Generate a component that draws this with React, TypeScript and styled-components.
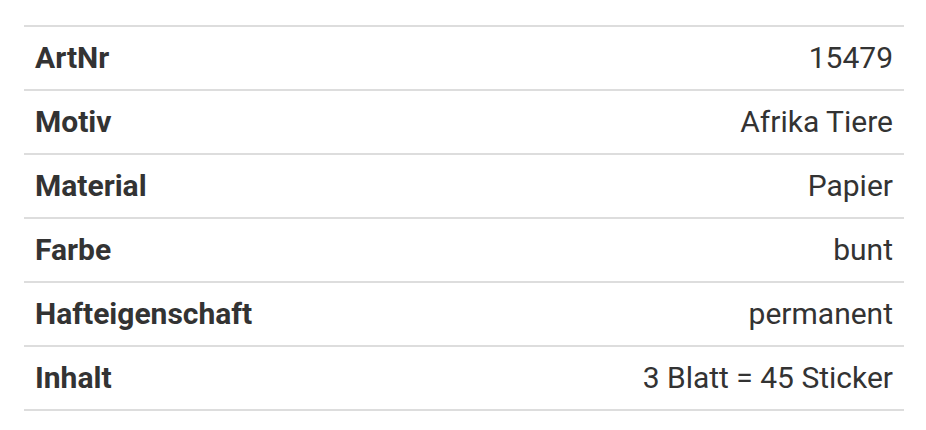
import React from "react";
import styled, { createGlobalStyle } from "styled-components";

const GlobalStyle = createGlobalStyle`
  html, body {
    margin: 0;
    padding: 0;
    background: #ffffff;
  }
  body {
    font-family: Roboto, "Liberation Sans", sans-serif;
    color: #333333;
  }
`;

const Page = styled.div`
  padding: 25px 22px 0 24px;
`;

const Table = styled.div`
  width: 880px;
  border-bottom: 2px solid #dddddd;
`;

const Row = styled.div`
  display: flex;
  justify-content: space-between;
  align-items: center;
  height: 62px;
  padding: 0 11px;
  border-top: 2px solid #dddddd;
  font-size: 30px;
  line-height: 1;
`;

const Label = styled.span`
  font-weight: 700;
`;

const Value = styled.span`
  font-weight: 400;
  text-align: right;
`;

const specs: [string, string][] = [
  ["ArtNr", "15479"],
  ["Motiv", "Afrika Tiere"],
  ["Material", "Papier"],
  ["Farbe", "bunt"],
  ["Hafteigenschaft", "permanent"],
  ["Inhalt", "3 Blatt = 45 Sticker"],
];

export default function App() {
  return (
    <>
      <GlobalStyle />
      <Page>
        <Table>
          {specs.map(([label, value]) => (
            <Row key={label}>
              <Label>{label}</Label>
              <Value>{value}</Value>
            </Row>
          ))}
        </Table>
      </Page>
    </>
  );
}
